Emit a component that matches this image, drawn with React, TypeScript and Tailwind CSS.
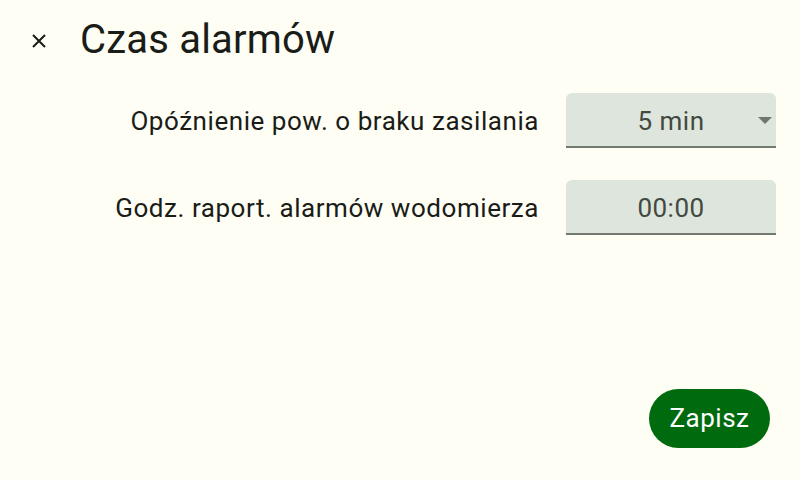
import React from 'react';

function Field({ value, dropdown }: { value: string; dropdown?: boolean }) {
  return (
    <div className="relative flex h-[55px] w-[210px] items-center justify-center rounded-t-[6px] border-b-2 border-[#72796f] bg-[#dde5dd] pt-[3px] text-[26px] text-[#424940]">
      <span className="tracking-[0.5px]">{value}</span>
      {dropdown ? (
        <svg className="absolute right-[4px] top-[24px]" width="14" height="7" viewBox="0 0 14 7">
          <path d="M0 0 L14 0 L7 7 Z" fill="#6f776c" />
        </svg>
      ) : null}
    </div>
  );
}

function Row({ label, children }: { label: string; children: React.ReactNode }) {
  return (
    <div className="flex items-center justify-end gap-[27px]">
      <div className="pt-[2px] text-[26px] tracking-[0.55px] text-[#1a1c18]">{label}</div>
      {children}
    </div>
  );
}

export default function App() {
  return (
    <div
      className="flex h-[480px] w-[800px] flex-col bg-[#fefef5] text-[#1a1c18]"
      style={{ fontFamily: 'Roboto, "Noto Sans", sans-serif' }}
    >
      <div className="flex h-[80px] items-center pl-[29px] pb-[1px]">
        <svg width="20" height="20" viewBox="0 0 20 20" className="mt-[2px]">
          <path d="M4 4 L16 16 M16 4 L4 16" stroke="#1a1c18" strokeWidth="2" />
        </svg>
        <h1 className="ml-[31px] text-[40px] font-normal leading-none tracking-[0.2px]">Czas alarmów</h1>
      </div>

      <div className="mt-[13px] flex flex-col gap-[32px] pr-[24px]">
        <Row label="Opóźnienie pow. o braku zasilania">
          <Field value="5 min" dropdown />
        </Row>
        <Row label="Godz. raport. alarmów wodomierza">
          <Field value="00:00" />
        </Row>
      </div>

      <div className="mt-auto flex justify-end pb-[32px] pr-[30px]">
        <button className="flex h-[59px] w-[121px] items-center justify-center rounded-full bg-[#006a0f] text-[26px] tracking-[0.5px] text-white">
          Zapisz
        </button>
      </div>
    </div>
  );
}
